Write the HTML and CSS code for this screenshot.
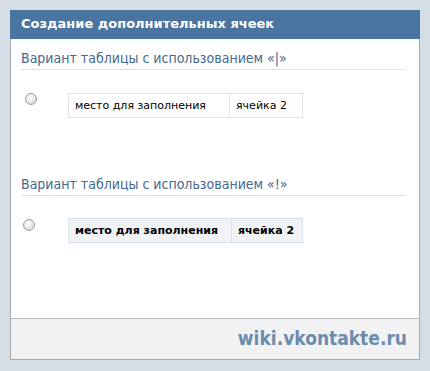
FILE: index.html
```html
<!DOCTYPE html>
<html lang="ru">
<head>
    <meta charset="UTF-8">
    <title>Создание дополнительных ячеек</title>
    <link rel="stylesheet" href="styles.css">
</head>
<body>
<div class="box">
    <div class="box-title">Создание дополнительных ячеек</div>
    <div class="box-body">
        <h3 class="variant">Вариант таблицы с использованием «|»</h3>
        <div class="row">
            <span class="radio"></span>
            <table class="wtable">
                <tr><td class="c1">место для заполнения</td><td class="c2">ячейка 2</td></tr>
            </table>
        </div>
        <h3 class="variant second">Вариант таблицы с использованием «!»</h3>
        <div class="row second">
            <span class="radio"></span>
            <table class="wtable head">
                <tr><th class="c1">место для заполнения</th><th class="c2">ячейка 2</th></tr>
            </table>
        </div>
    </div>
    <div class="box-foot">wiki.vkontakte.ru</div>
</div>
</body>
</html>
```
FILE: styles.css
```css
* {
    padding: 0;
    margin: 0;
    box-sizing: border-box;
}

body {
    background: #d5dde5;
    font-family: "DejaVu Sans", sans-serif;
    padding: 10px;
}

.box {
    width: 410px;
    height: 350px;
    display: flex;
    flex-direction: column;
    background: #fff;
    border: 1px solid #a9a9a9;
    border-top: 0;
}

.box-title {
    height: 29px;
    margin: 0 -1px;
    padding: 6px 0 0 11px;
    background: #4a75a0;
    color: #fff;
    font-weight: bold;
    font-size: 13px;
}

.box-body {
    flex: 1;
    padding: 0 14px 0 10px;
}

.variant {
    font-family: "DejaVu Sans Condensed", "DejaVu Sans", sans-serif;
    font-weight: normal;
    font-size: 14px;
    line-height: 17px;
    color: #45688e;
    padding: 11px 0 2px 0;
    border-bottom: 1px solid #dae1e8;
}

.variant.second {
    margin-top: 47px;
}

.row {
    display: flex;
    align-items: flex-start;
    padding: 23px 0 0 4px;
}

.row.second {
    padding: 22px 0 0 2px;
}

.row.second .radio {
    margin-top: 1px;
}

.row.second .wtable {
    margin-left: 33px;
}

.radio {
    width: 12px;
    height: 12px;
    border-radius: 50%;
    border: 1px solid #a0a0a0;
    background: radial-gradient(circle at 40% 35%, #fff 0, #e8e8e8 50%, #c8c8c8 100%);
}

.wtable {
    margin-left: 31px;
    border-collapse: collapse;
    font-size: 11px;
    color: #000;
}

.wtable td, .wtable th {
    border: 1px solid #dde3ea;
    height: 24px;
    padding: 0 6px;
    text-align: left;
}

.wtable .c1 { width: 161px; }
.wtable .c2 { width: 73px; }

.wtable.head .c1 { width: 163px; }
.wtable.head .c2 { width: 71px; }

.wtable.head th {
    background: #f0f2f5;
    font-weight: bold;
}

.box-foot {
    height: 41px;
    border-top: 1px solid #bdbdbd;
    background: #f2f2f2;
    text-align: right;
    padding: 8px 12px 0 0;
    font-family: "DejaVu Sans Condensed", "DejaVu Sans", sans-serif;
    font-size: 19px;
    font-weight: bold;
    color: #6b8cae;
}
```
